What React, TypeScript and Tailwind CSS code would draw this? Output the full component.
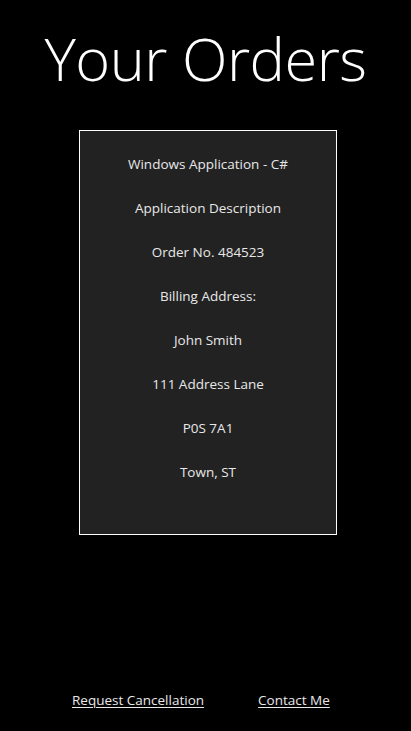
export default function App() {
  const lines = [
    'Windows Application - C#',
    'Application Description',
    'Order No. 484523',
    'Billing Address:',
    'John Smith',
    '111 Address Lane',
    'P0S 7A1',
    'Town, ST',
  ]

  return (
    <div
      className="flex h-[731px] w-full flex-col items-center bg-black text-white"
      style={{ fontFamily: '"Open Sans", "Noto Sans", sans-serif' }}
    >
      {/* Title */}
      <h1 className="mt-[18px] text-[59.5px] font-light leading-[80px] tracking-[-0.5px]">
        Your Orders
      </h1>

      {/* Order card */}
      <div className="mt-[32px] ml-[5px] flex w-[258px] flex-col border border-white bg-[#222222] pt-[11px] pb-[40px]">
        {lines.map((line) => (
          <p key={line} className="h-[44px] text-center text-[13.5px] leading-[44px] text-[#e8e8e8]">
            {line}
          </p>
        ))}
      </div>

      {/* Links */}
      <div className="mt-auto mb-[21px] flex w-full justify-start gap-[54px] pl-[72px] text-[13.5px] leading-[20px] text-[#e8e8e8]">
        <a href="#" className="underline underline-offset-2">
          Request Cancellation
        </a>
        <a href="#" className="underline underline-offset-2">
          Contact Me
        </a>
      </div>
    </div>
  )
}
